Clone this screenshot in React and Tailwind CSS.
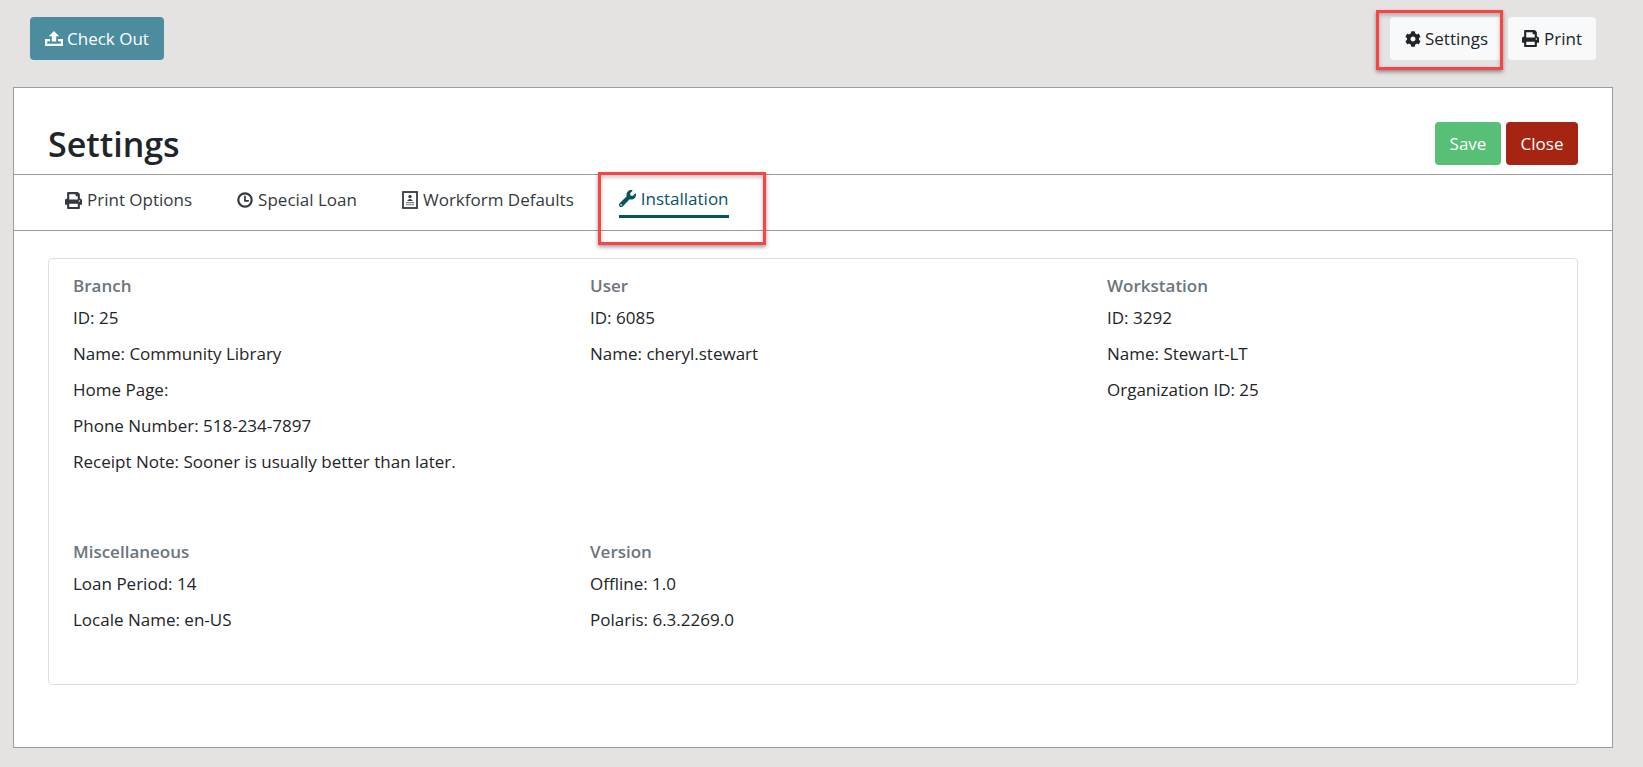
import React from "react";
import { FaPrint, FaCog, FaWrench } from "react-icons/fa";

const font = { fontFamily: '"Open Sans", sans-serif' };

function UploadIcon() {
  return (
    <svg viewBox="0 0 18 15" className="w-[18px] h-[15px]" fill="currentColor">
      <path d="M9 0 L14.2 5.2 H11.2 V10.5 H6.8 V5.2 H3.8 Z" />
      <path d="M0 8 H5 V10.2 H2.2 V12.8 H15.8 V10.2 H13 V8 H18 V15 H0 Z" />
    </svg>
  );
}
function ClockIcon() {
  return (
    <svg viewBox="0 0 16 16" className="w-[16px] h-[16px]" fill="none" stroke="currentColor">
      <circle cx="8" cy="8" r="6.7" strokeWidth="2.2" />
      <path d="M8 3.8 V8.8 H11.8" strokeWidth="1.7" />
    </svg>
  );
}
function FormIcon() {
  return (
    <svg viewBox="0 0 16 18" className="w-[16px] h-[18px]" fill="none" stroke="currentColor">
      <rect x="1" y="1" width="14" height="16" strokeWidth="1.8" />
      <circle cx="8" cy="5.6" r="1.7" fill="currentColor" stroke="none" />
      <path d="M5 10 Q8 5.8 11 10 Z" fill="currentColor" stroke="none" />
      <path d="M4 11.6 H12 M4 13.8 H12" strokeWidth="1.1" opacity="0.65" />
    </svg>
  );
}

function Section({ title, rows }) {
  return (
    <div>
      <div className="font-semibold text-[#6c757d] text-[17px] leading-[24px] mb-[8px]">{title}</div>
      {rows.map((r) => (
        <div key={r} className="text-[#212529] text-[17px] leading-[24px] mb-[12px] min-h-[24px]">{r}</div>
      ))}
    </div>
  );
}

function Tab({ icon, label, active }) {
  return (
    <div className={`flex items-center gap-[5px] h-[36px] mt-[7px] text-[17px] ${active ? "text-[#07545f] border-b-[3px] border-[#07545f]" : "text-[#343a40]"}`}>
      {icon}
      <span>{label}</span>
    </div>
  );
}

export default function App() {
  return (
    <div style={font} className="w-[1643px] h-[767px] overflow-hidden bg-[#e4e3e1] flex flex-col">
      <div className="h-[87px] flex justify-between items-start pt-[17px] pl-[30px] pr-[47px] relative">
        <button className="h-[43px] w-[134px] rounded-[4px] bg-[#4b8c9f] text-white text-[17px] flex items-center justify-center gap-[4px]">
          <UploadIcon /> Check Out
        </button>
        <div className="flex gap-[5px]">
          <button className="h-[43px] w-[113px] rounded-[4px] bg-[#f8f9fa] text-[#212529] text-[17px] flex items-center justify-center gap-[4px]">
            <FaCog className="w-[16px] h-[16px]" /> Settings
          </button>
          <button className="h-[43px] w-[88px] rounded-[4px] bg-[#f8f9fa] text-[#212529] text-[17px] flex items-center justify-center gap-[5px]">
            <FaPrint className="w-[17px] h-[17px]" /> Print
          </button>
        </div>
        <div className="absolute left-[1376px] top-[10px] w-[127px] h-[60px] border-[3px] border-[#f74447] shadow-[0_2px_4px_rgba(0,0,0,0.4),inset_0_2px_4px_rgba(0,0,0,0.25)]" />
      </div>
      <div className="ml-[13px] w-[1600px] h-[661px] bg-white border border-[#9b9b9b] flex flex-col">
        <div className="h-[87px] border-b border-[#9b9b9b] flex justify-between items-start pl-[34px] pr-[34px] shrink-0">
          <h1 className="text-[34px] font-semibold text-[#212529] leading-[48px] mt-[32px]">Settings</h1>
          <div className="flex gap-[5px] mt-[34px]">
            <button className="h-[43px] w-[66px] rounded-[4px] bg-[#58bf76] text-white text-[17px]">Save</button>
            <button className="h-[43px] w-[72px] rounded-[4px] bg-[#a52412] text-white text-[17px]">Close</button>
          </div>
        </div>
        <div className="h-[56px] border-b border-[#9b9b9b] flex pl-[51px] gap-[45px] shrink-0 relative">
          <Tab icon={<FaPrint className="w-[17px] h-[17px]" />} label="Print Options" />
          <Tab icon={<ClockIcon />} label="Special Loan" />
          <Tab icon={<FormIcon />} label="Workform Defaults" />
          <Tab icon={<FaWrench className="w-[17px] h-[17px]" />} label="Installation" active />
          <div className="absolute left-[584px] top-[-3px] w-[168px] h-[73px] border-[3px] border-[#f74447] shadow-[0_2px_4px_rgba(0,0,0,0.4),inset_0_2px_4px_rgba(0,0,0,0.25)]" />
        </div>
        <div className="mt-[27px] mx-[34px] h-[427px] border border-[#dfdfdf] rounded-[4px] px-[24px] pt-[15px]">
          <div className="grid grid-cols-[517px_517px_1fr] h-[266px]">
            <Section title="Branch" rows={["ID: 25", "Name: Community Library", "Home Page:", "Phone Number: 518-234-7897", "Receipt Note: Sooner is usually better than later."]} />
            <Section title="User" rows={["ID: 6085", "Name: cheryl.stewart"]} />
            <Section title="Workstation" rows={["ID: 3292", "Name: Stewart-LT", "Organization ID: 25"]} />
          </div>
          <div className="grid grid-cols-[517px_517px_1fr]">
            <Section title="Miscellaneous" rows={["Loan Period: 14", "Locale Name: en-US"]} />
            <Section title="Version" rows={["Offline: 1.0", "Polaris: 6.3.2269.0"]} />
          </div>
        </div>
      </div>
    </div>
  );
}
